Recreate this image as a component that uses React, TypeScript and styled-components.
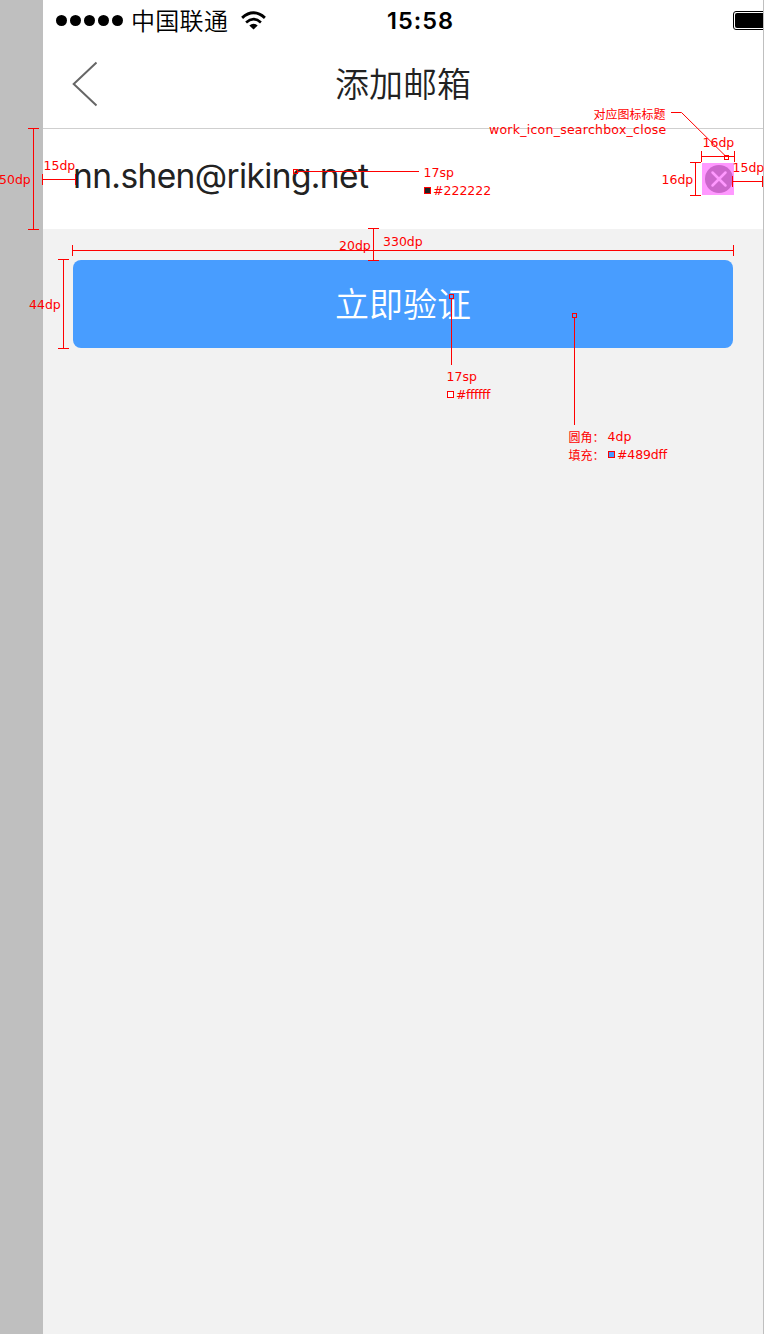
import React from 'react';
import styled, { createGlobalStyle } from 'styled-components';

const GlobalStyle = createGlobalStyle`
  * { box-sizing: border-box; }
  body { margin: 0; background: #bfbfbf; }
`;

const Board = styled.div`
  position: relative;
  width: 764px;
  height: 1334px;
  padding: 0 1px 0 43px;
  overflow: hidden;
  background: #bfbfbf;
`;

const Screen = styled.main`
  display: flex;
  flex-direction: column;
  height: 100%;
  background: #f2f2f2;
  font-family: Inter, 'Noto Sans CJK SC', sans-serif;
  color: #222222;
  overflow: hidden;
`;

const StatusBar = styled.div`
  display: grid;
  grid-template-columns: 344px 1fr 30px;
  align-items: center;
  height: 40px;
  background: #fff;
  color: #000;
`;

const Carrier = styled.div`
  display: flex;
  align-items: center;
  height: 40px;
  padding-left: 13px;
`;

const Dots = styled.div`
  display: flex;
  gap: 3px;
  margin-right: 8px;
`;

const Dot = styled.i`
  width: 11px;
  height: 11px;
  border-radius: 50%;
  background: #000;
`;

const CarrierName = styled.span`
  font: 350 24px/38px 'Noto Sans CJK SC', sans-serif;
  padding-bottom: 1px;
  letter-spacing: 0.3px;
  margin-right: 12px;
`;

const Time = styled.span`
  font: 600 23.5px/40px Inter, sans-serif;
  letter-spacing: 1px;
  padding-top: 1px;
`;

const Battery = styled.div`
  width: 49px;
  height: 19px;
  border: 1px solid #000;
  border-radius: 3px;
  padding: 1px;

  &::before {
    content: '';
    display: block;
    height: 100%;
    border-radius: 2px;
    background: #000;
  }
`;

const NavBar = styled.header`
  display: grid;
  grid-template-columns: 60px 1fr 60px;
  align-items: center;
  height: 89px;
  border-bottom: 1px solid #cfcfcf;
  background: #fff;
`;

const BackIcon = styled.svg`
  width: 28px;
  height: 46px;
  margin-left: 28px;
`;

const Title = styled.h1`
  margin: 0;
  padding-bottom: 2px;
  text-align: center;
  font: 350 34px/80px 'Noto Sans CJK SC', sans-serif;
`;

const EmailRow = styled.div`
  display: flex;
  align-items: center;
  justify-content: space-between;
  height: 100px;
  padding: 0 29px 0 30px;
  background: #fff;
`;

const Email = styled.span`
  font: 400 33.5px/90px Inter, sans-serif;
  letter-spacing: -0.62px;
  padding-bottom: 6px;
`;

const ClearIcon = styled.svg`
  width: 32px;
  height: 32px;
`;

const Submit = styled.button`
  height: 88px;
  margin: 31px 30px 0;
  padding: 0 0 2px;
  border: 0;
  border-radius: 8px;
  background: #489dff;
  color: #fff;
  font: 350 34px/86px 'Noto Sans CJK SC', sans-serif;
`;

const Overlay = styled.svg`
  position: absolute;
  inset: 0;
  width: 764px;
  height: 1334px;
  pointer-events: none;
`;

/* Free-floating annotation on the board; $y is the centre of its first line. */
const Note = styled.div<{ $x: number; $y: number }>`
  position: absolute;
  left: ${(p) => p.$x}px;
  top: ${(p) => p.$y - 9}px;
  display: flex;
  flex-direction: column;
  color: #f00;
  font: 12.5px/18px 'DejaVu Sans', 'Noto Sans CJK SC', sans-serif;
  white-space: pre;
`;

const NoteLine = styled.div<{ $track?: number }>`
  display: flex;
  align-items: center;
  height: 18px;
  letter-spacing: ${(p) => p.$track ?? 0}px;
`;

const Swatch = styled.i<{ $color: string }>`
  width: 7px;
  height: 7px;
  margin: 0 2px 1px 0.5px;
  border: 1px solid #f00;
  background: ${(p) => p.$color};
`;

const Key = styled.span`
  width: 39px;
  padding-top: 2px;
  font-size: 12px;
  letter-spacing: 0;
`;

const IconNote = styled(Note)`
  align-items: flex-end;
  line-height: 16px;
  letter-spacing: 0.25px;
`;

const IconCaption = styled.span`
  height: 15px;
  padding-right: 1px;
  font-size: 12px;
  letter-spacing: 0;
`;

type Span = { from: number; to: number; at: number };

/* Dimension line along x with an 11px tick at each end. */
const HSpan = ({ from, to, at }: Span) => (
  <path d={`M${from} ${at + 0.5}H${to + 1}M${from + 0.5} ${at - 5}v11M${to + 0.5} ${at - 5}v11`} />
);

/* Dimension line along y. */
const VSpan = ({ from, to, at }: Span) => (
  <path d={`M${at + 0.5} ${from}V${to + 1}M${at - 5} ${from + 0.5}h11M${at - 5} ${to + 0.5}h11`} />
);

const dimensions = [
  { x: -1, y: 180, text: '50dp' },
  { x: 43.5, y: 166, text: '15dp' },
  { x: 29, y: 305, text: '44dp' },
  { x: 339, y: 246, text: '20dp' },
  { x: 383, y: 242, text: '330dp' },
  { x: 702.5, y: 143, text: '16dp' },
  { x: 661.5, y: 180, text: '16dp' },
  { x: 732.5, y: 168, text: '15dp' },
];

export default function App() {
  return (
    <Board>
      <GlobalStyle />
      <Screen>
        <StatusBar>
          <Carrier>
            <Dots>
              {[0, 1, 2, 3, 4].map((i) => (
                <Dot key={i} />
              ))}
            </Dots>
            <CarrierName>中国联通</CarrierName>
            <svg width="27" height="20" viewBox="-0.5 0 27 20">
              <path d="M1.6 6.8Q13-3.2 24.4 6.8" fill="none" stroke="#000" strokeWidth="2.9" />
              <path d="M5.6 11.4Q13 5 20.4 11.4" fill="none" stroke="#000" strokeWidth="2.7" />
              <path d="M8.8 14.6Q13 10.8 17.2 14.6L13 18.6Z" />
            </svg>
          </Carrier>
          <Time>15:58</Time>
          <Battery />
        </StatusBar>
        <NavBar>
          <BackIcon viewBox="0 0 28 46" fill="none" stroke="#666" strokeWidth="2">
            <path d="M25.5 1.5L2.7 23L25.5 44.5" />
          </BackIcon>
          <Title>添加邮箱</Title>
        </NavBar>
        <EmailRow>
          <Email>nn.shen@riking.net</Email>
          <ClearIcon viewBox="0 0 32 32">
            <rect width="32" height="32" fill="#ff99ff" />
            <circle cx="17" cy="16" r="14" fill="#cc66cc" />
            <path d="M10.5 9.5l13 13M23.5 9.5l-13 13" stroke="#ff99ff" strokeWidth="2.5" strokeLinecap="round" />
          </ClearIcon>
        </EmailRow>
        <Submit>立即验证</Submit>
      </Screen>

      <Overlay fill="none" stroke="#f00" strokeWidth="1">
        <VSpan at={33} from={128} to={229} />
        <HSpan at={179} from={42} to={75} />
        <HSpan at={250} from={72} to={733} />
        <VSpan at={373} from={228} to={260} />
        <VSpan at={63} from={259} to={348} />
        <HSpan at={156} from={701} to={734} />
        <VSpan at={695} from={162} to={195} />
        <HSpan at={181} from={732} to={762} />
        <path d="M671 112.5H681.5L725 155.5" />
        <rect x="724.5" y="155.5" width="4" height="4" />
        <rect x="293.5" y="169.5" width="4" height="4" />
        <path d="M298 171.5H419" />
        <rect x="449.5" y="294.5" width="4" height="4" />
        <path d="M451.5 299V365" />
        <rect x="572.5" y="313.5" width="4" height="4" />
        <path d="M574.5 318V425" />
      </Overlay>

      {dimensions.map((d) => (
        <Note key={`${d.x}-${d.y}`} $x={d.x} $y={d.y}>
          {d.text}
        </Note>
      ))}
      <IconNote $x={489} $y={116}>
        <IconCaption>对应图标标题</IconCaption>
        <span>work_icon_searchbox_close</span>
      </IconNote>
      <Note $x={423.5} $y={173}>
        <NoteLine>17sp</NoteLine>
        <NoteLine>
          <Swatch $color="#222222" />#222222
        </NoteLine>
      </Note>
      <Note $x={446.5} $y={377}>
        <NoteLine>17sp</NoteLine>
        <NoteLine $track={-0.4}>
          <Swatch $color="#ffffff" />#ffffff
        </NoteLine>
      </Note>
      <Note $x={568.5} $y={437}>
        <NoteLine>
          <Key>圆角：</Key>4dp
        </NoteLine>
        <NoteLine $track={-0.15}>
          <Key>填充：</Key>
          <Swatch $color="#489dff" />#489dff
        </NoteLine>
      </Note>
    </Board>
  );
}
